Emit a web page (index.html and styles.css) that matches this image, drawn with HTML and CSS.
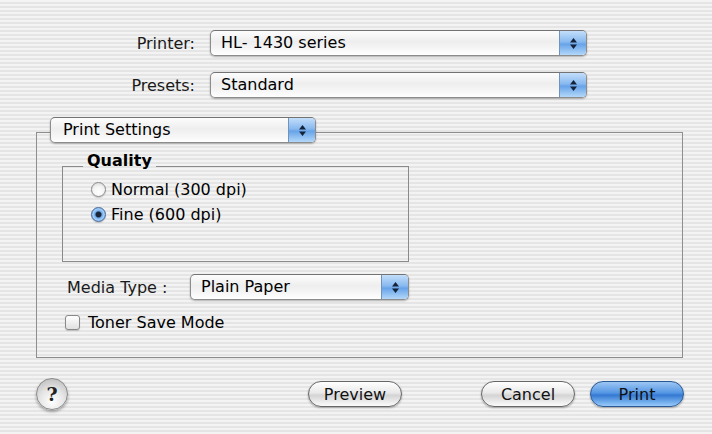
FILE: index.html
```html
<!DOCTYPE html>
<html>
<head>
    <title>Print</title>
    <link rel="stylesheet" href="styles.css">
</head>
<body>

    <div class="dialog">

        <div class="top-rows">
            <span class="row-label">Printer:</span>
            <div class="popup">
                <span class="popup-text">HL- 1430 series</span>
                <span class="popup-arrow">
                    <svg width="7" height="11" viewBox="0 0 7 11"><path d="M3.5 0 L7 4.5 H0 Z M3.5 11 L0 6.5 H7 Z" fill="#15233a"/></svg>
                </span>
            </div>
            <span class="row-label">Presets:</span>
            <div class="popup">
                <span class="popup-text">Standard</span>
                <span class="popup-arrow">
                    <svg width="7" height="11" viewBox="0 0 7 11"><path d="M3.5 0 L7 4.5 H0 Z M3.5 11 L0 6.5 H7 Z" fill="#15233a"/></svg>
                </span>
            </div>
        </div>

        <div class="settings-box">
            <div class="popup pane-popup">
                <span class="popup-text">Print Settings</span>
                <span class="popup-arrow">
                    <svg width="7" height="11" viewBox="0 0 7 11"><path d="M3.5 0 L7 4.5 H0 Z M3.5 11 L0 6.5 H7 Z" fill="#15233a"/></svg>
                </span>
            </div>

            <fieldset class="quality-group">
                <legend>Quality</legend>
                <div class="radio-list">
                    <div class="radio-row">
                        <span class="radio"></span>
                        <span>Normal (300 dpi)</span>
                    </div>
                    <div class="radio-row">
                        <span class="radio checked"></span>
                        <span>Fine (600 dpi)</span>
                    </div>
                </div>
            </fieldset>

            <div class="media-row">
                <span class="media-label">Media Type :</span>
                <div class="popup media-popup">
                    <span class="popup-text">Plain Paper</span>
                    <span class="popup-arrow">
                        <svg width="7" height="11" viewBox="0 0 7 11"><path d="M3.5 0 L7 4.5 H0 Z M3.5 11 L0 6.5 H7 Z" fill="#15233a"/></svg>
                    </span>
                </div>
            </div>

            <div class="check-row">
                <span class="checkbox"></span>
                <span>Toner Save Mode</span>
            </div>
        </div>

        <div class="button-bar">
            <span class="help-button">?</span>
            <button class="pill preview-button">Preview</button>
            <button class="pill cancel-button">Cancel</button>
            <button class="pill default-button">Print</button>
        </div>

    </div>

</body>
</html>
```

FILE: styles.css
```css
body {
    margin: 0;
    font-family: "DejaVu Sans", "Liberation Sans", sans-serif;
    font-size: 16px;
    color: #000;
    background: repeating-linear-gradient(to bottom, #f3f3f3 0, #f3f3f3 2px, #e5e5e5 2px, #e5e5e5 4px);
    height: 434px;
    overflow: hidden;
}

.dialog {
    width: 648px;
    padding: 30px 0 0 36px;
}

/* printer / presets rows */

.top-rows {
    display: grid;
    grid-template-columns: 159px 377px;
    column-gap: 15px;
    row-gap: 16px;
    align-items: center;
}

.row-label {
    text-align: right;
    color: #1a1a1a;
}

/* popup menus */

.popup {
    display: flex;
    height: 26px;
    box-sizing: border-box;
    border: 1px solid #8c8c8c;
    border-top-color: #737373;
    border-radius: 5px;
    background: linear-gradient(to bottom, #fdfdfd 0%, #eeeeee 45%, #f6f6f6 75%, #ffffff 100%);
    box-shadow: 0 1px 2px rgba(0, 0, 0, 0.28);
}

.popup-text {
    flex: 1;
    padding-left: 10px;
    line-height: 24px;
    white-space: nowrap;
}

.popup-arrow {
    width: 26px;
    display: flex;
    align-items: center;
    justify-content: center;
    border-left: 1px solid #7192bb;
    border-radius: 0 4px 4px 0;
    background: linear-gradient(to bottom, #c3defa 0%, #88b9ef 45%, #67a3e8 55%, #b3d8fa 100%);
}

/* print settings box */

.settings-box {
    margin-top: 34px;
    width: 647px;
    height: 226px;
    box-sizing: border-box;
    border: 1px solid #8e8e8e;
}

.pane-popup {
    width: 266px;
    margin: -16px 0 0 13px;
}

.pane-popup .popup-text {
    padding-left: 12px;
}

.quality-group {
    width: 347px;
    box-sizing: border-box;
    margin: 10px 0 0 25px;
    padding: 0;
    border: 1px solid #8a8a8a;
}

.quality-group legend {
    margin-left: 20px;
    padding: 0 4px 11px 4px;
    font-weight: bold;
    line-height: 16px;
}

.radio-list {
    margin-top: -3px;
    padding: 0 0 34px 28px;
}

.radio-row {
    display: flex;
    align-items: center;
    gap: 5px;
    height: 25px;
}

.radio {
    width: 15px;
    height: 15px;
    box-sizing: border-box;
    border-radius: 50%;
    border: 1px solid #8a8a8a;
    background: radial-gradient(circle at 50% 70%, #ffffff 0%, #f4f4f4 50%, #d2d2d2 100%);
    box-shadow: 0 1px 1px rgba(0, 0, 0, 0.18);
}

.radio.checked {
    border-color: #48699a;
    background: radial-gradient(circle at 50% 50%, #1b2638 0, #1b2638 2.5px, #6ea8e8 3.5px, #a3cff8 60%, #4f8fd8 100%);
}

.media-row {
    display: flex;
    align-items: center;
    margin: 12px 0 0 30px;
}

.media-label {
    width: 123px;
    color: #1a1a1a;
}

.media-popup {
    width: 219px;
}

.check-row {
    display: flex;
    align-items: center;
    gap: 8px;
    margin: 13px 0 0 28px;
}

.checkbox {
    width: 15px;
    height: 15px;
    box-sizing: border-box;
    border: 1px solid #888;
    border-radius: 3px;
    background: linear-gradient(to bottom, #ffffff, #e0e0e0);
    box-shadow: 0 1px 1px rgba(0, 0, 0, 0.18);
}

/* bottom buttons */

.button-bar {
    display: flex;
    align-items: center;
    margin-top: 23px;
    height: 26px;
}

.help-button {
    width: 32px;
    height: 32px;
    box-sizing: border-box;
    border-radius: 50%;
    border: 1px solid #8a8a8a;
    background: radial-gradient(circle at 50% 75%, #ffffff 0%, #e6e6e6 45%, #b4b4b4 100%);
    box-shadow: 0 2px 3px rgba(0, 0, 0, 0.32);
    display: flex;
    align-items: center;
    justify-content: center;
    font-family: "DejaVu Serif", serif;
    font-weight: bold;
    font-size: 19px;
    color: #222;
}

.pill {
    width: 94px;
    height: 26px;
    padding: 0;
    font-family: inherit;
    font-size: 16px;
    color: #111;
    border: 1px solid #666;
    border-radius: 13px;
    background: linear-gradient(to bottom, #ffffff 0%, #e9e9e9 45%, #d4d4d4 55%, #fbfbfb 100%);
    box-shadow: 0 1px 2px rgba(0, 0, 0, 0.32);
}

.preview-button {
    margin-left: 240px;
}

.cancel-button {
    margin-left: auto;
}

.default-button {
    margin-left: 15px;
    border-color: #2a5894;
    background: linear-gradient(to bottom, #9cc6f3 0%, #5597e4 45%, #3479d3 55%, #97cbfa 100%);
}
```
